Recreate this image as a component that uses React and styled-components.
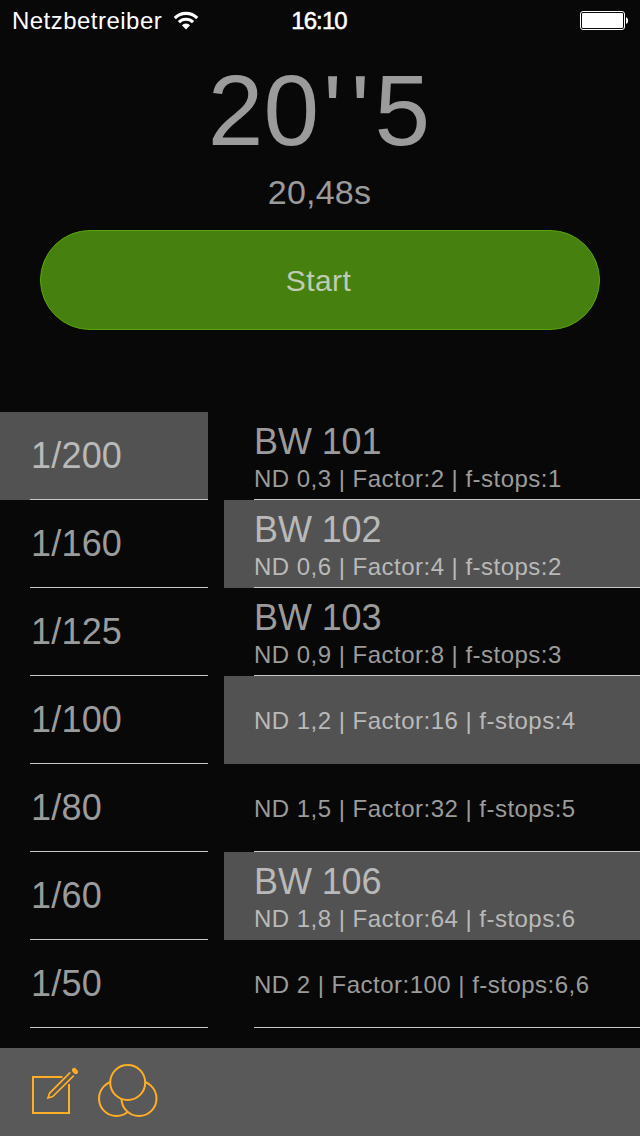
import React, {useState} from 'react';
import styled, {createGlobalStyle} from 'styled-components';

const GlobalStyle = createGlobalStyle`
body{
    margin: 0;
    background: #080808;
}
`;

const Wrapper = styled.div`
display: flex;
flex-direction: column;
width: 640px;
height: 1136px;
overflow: hidden;
background: #080808;
color: #9b9b9b;
font-family: "Liberation Sans", Arial, sans-serif;
`;

const StatusBar = styled.header`
display: grid;
grid-template-columns: 1fr auto 1fr;
align-items: center;
height: 40px;
padding: 0 11px 0 12px;
color: #fff;
font-size: 24px;
`;

const Carrier = styled.div`
display: flex;
align-items: center;
gap: 11px;
padding-top: 1px;
letter-spacing: 0.47px;
`;

const Clock = styled.div`
padding: 2px 3px 0 0;
letter-spacing: -0.9px;
-webkit-text-stroke: 0.5px #fff;
`;

const Battery = styled.svg`
justify-self: end;
`;

const Timer = styled.section`
display: flex;
flex-direction: column;
align-items: center;
height: 372px;
`;

const Time = styled.div`
height: 130px;
padding-right: 2px;
line-height: 140px;
font-size: 100px;

span{
    letter-spacing: 8.7px;
    margin-left: 4px;
    margin-right: -4px;
}
`;

const Seconds = styled.div`
height: 60px;
padding-right: 1px;
line-height: 44px;
font-size: 34px;
letter-spacing: 0.2px;
`;

const StartButton = styled.button`
width: 560px;
height: 100px;
padding: 2px 3px 0 0;
border: 1px solid #5aa50e;
border-radius: 50px;
background: #46800e;
color: #c0cbb6;
font-family: inherit;
font-size: 30px;
letter-spacing: 0.4px;
`;

const Lists = styled.main`
display: grid;
grid-template-columns: 208px 416px;
column-gap: 16px;
height: 636px;
`;

const List = styled.div`
display: flex;
flex-direction: column;
`;

const Row = styled.div`
display: flex;
flex-direction: column;
height: 88px;
padding-left: 30px;
background: ${props => props.$selected ? '#525252' : 'transparent'};
color: ${props => props.$selected ? '#b9b9b9' : '#9b9b9b'};
`;

const Cell = styled.div`
display: flex;
flex: 1;
flex-direction: column;
justify-content: center;
box-sizing: border-box;
padding-top: ${props => props.$top || 0}px;
border-bottom: 1px solid ${props => props.$line ? '#c8c7cc' : 'transparent'};
`;

const Speed = styled.div`
padding-left: 1px;
font-size: 36px;
line-height: 42px;
letter-spacing: 0.2px;
`;

const FilterName = styled.div`
margin-top: 1px;
font-size: 36px;
line-height: 42px;
letter-spacing: -0.1px;
`;

const FilterInfo = styled.div`
font-size: 24px;
line-height: 32px;
letter-spacing: 0.48px;
white-space: nowrap;
`;

const Toolbar = styled.footer`
display: flex;
align-items: center;
gap: 18px;
height: 88px;
padding-left: 30px;
background: #595959;
`;

const ToolIcon = styled.svg`
fill: none;
stroke: #ffaf26;
stroke-width: 2;
`;

const speeds = ['1/200', '1/160', '1/125', '1/100', '1/80', '1/60', '1/50'];

const filters = [
    {name: 'BW 101', nd: '0,3', factor: '2', stops: '1', line: true},
    {name: 'BW 102', nd: '0,6', factor: '4', stops: '2', line: true},
    {name: 'BW 103', nd: '0,9', factor: '8', stops: '3', line: true},
    {nd: '1,2', factor: '16', stops: '4', line: false},
    {nd: '1,5', factor: '32', stops: '5', line: true},
    {name: 'BW 106', nd: '1,8', factor: '64', stops: '6', line: false},
    {nd: '2', factor: '100', stops: '6,6', line: true},
];

function Wifi(){
    return(
        <svg width="26" height="20" viewBox="0 0 26 20">
            <g fill="none" stroke="#fff" strokeWidth="3.2">
                <path d="M1.8 7.1a15.8 15.8 0 0 1 22.4 0"/>
                <path d="M5.9 11.2a10 10 0 0 1 14.2 0"/>
            </g>
            <path d="M8.9 14.2a5.8 5.8 0 0 1 8.2 0L13 18.6z" fill="#fff"/>
        </svg>
    )
}

function App(){
    const [speed, setSpeed] = useState(0);
    const [picked, setPicked] = useState([1, 3, 5]);

    const toggle = index => setPicked(
        picked.includes(index) ? picked.filter(i => i !== index) : [...picked, index]
    );

    return(
        <Wrapper>
            <GlobalStyle/>
            <StatusBar>
                <Carrier>Netzbetreiber <Wifi/></Carrier>
                <Clock>16:10</Clock>
                <Battery width="49" height="20" viewBox="0 0 49 20">
                    <rect x="0.5" y="1.5" width="44" height="18" rx="2.5" fill="none" stroke="#fff"/>
                    <rect x="2" y="3" width="41" height="15" rx="1" fill="#fff"/>
                    <path d="M46 7.2c2.8.6 2.8 6 0 6.6z" fill="#fff"/>
                </Battery>
            </StatusBar>

            <Timer>
                <Time>20<span>''</span>5</Time>
                <Seconds>20,48s</Seconds>
                <StartButton>Start</StartButton>
            </Timer>

            <Lists>
                <List>
                    {speeds.map((item, index) => (
                        <Row key={item} $selected={speed === index} onClick={() => setSpeed(index)}>
                            <Cell $line $top={1}><Speed>{item}</Speed></Cell>
                        </Row>
                    ))}
                </List>
                <List>
                    {filters.map((item, index) => (
                        <Row key={item.nd} $selected={picked.includes(index)} onClick={() => toggle(index)}>
                            <Cell $line={item.line} $top={item.name ? 4 : 2}>
                                {item.name && <FilterName>{item.name}</FilterName>}
                                <FilterInfo>{`ND ${item.nd} | Factor:${item.factor} | f-stops:${item.stops}`}</FilterInfo>
                            </Cell>
                        </Row>
                    ))}
                </List>
            </Lists>

            <Toolbar>
                {/* edit */}
                <ToolIcon width="50" height="56" viewBox="0 0 50 56">
                    <path d="M32.5 13H3v36h36V20"/>
                    <path d="M40.3 8.3L19.5 29.3 18 34l4.7-1.5L43.8 11.6" strokeWidth="1.7"/>
                    <path d="M44.2 6.2l1.6 1.6" strokeWidth="4.6" strokeLinecap="round"/>
                </ToolIcon>
                {/* overlapping filters */}
                <ToolIcon width="60" height="56" viewBox="0 0 60 56">
                    <circle cx="18.5" cy="34.5" r="17.5"/>
                    <circle cx="41" cy="34.5" r="17.5" fill="#595959"/>
                    <circle cx="29.7" cy="18.5" r="17.5" fill="#595959"/>
                </ToolIcon>
            </Toolbar>
        </Wrapper>
    )
}

export default App;
